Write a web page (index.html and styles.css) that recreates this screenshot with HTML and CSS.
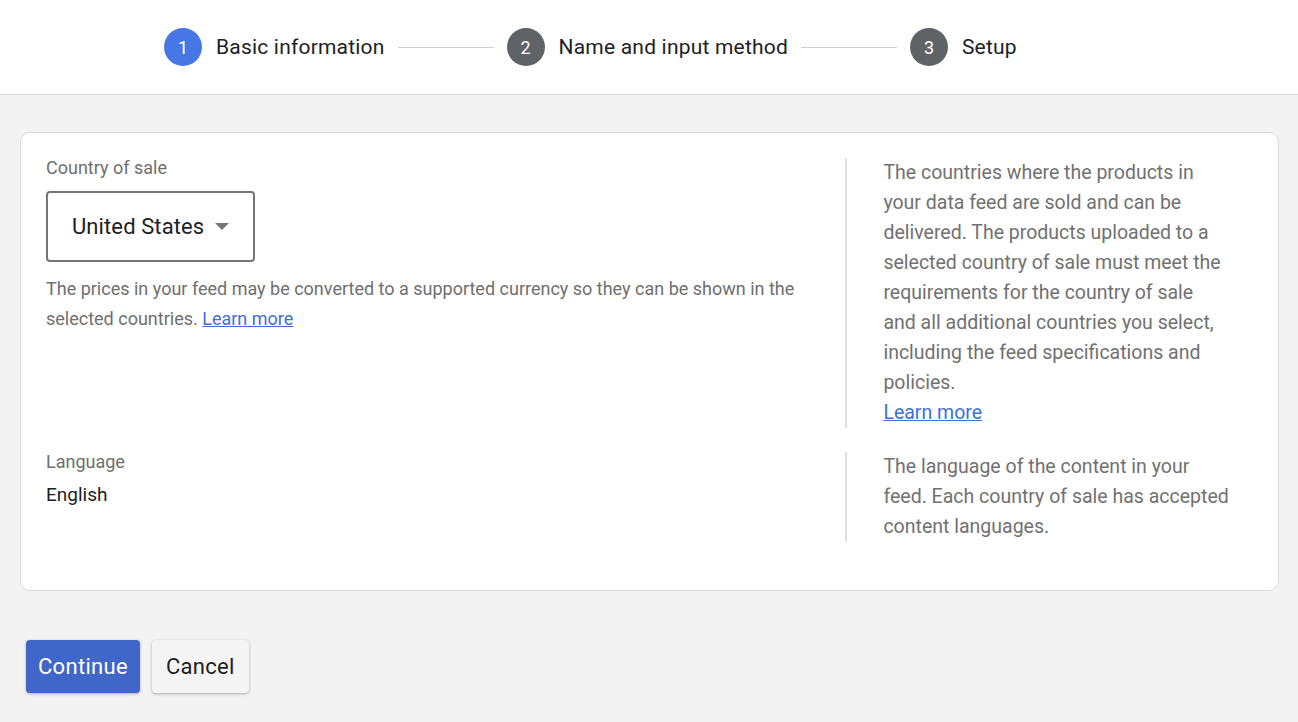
FILE: index.html
```html
<!DOCTYPE html>
<html lang="en">
<head>
  <meta charset="UTF-8">
  <meta name="viewport" content="width=device-width, initial-scale=1.0">
  <title>Create feed</title>
  <link rel="stylesheet" href="styles.css">
</head>
<body>
  <header class="stepper">
    <div class="step active">
      <span class="step-num">1</span>
      <span class="step-label">Basic information</span>
    </div>
    <span class="step-line"></span>
    <div class="step">
      <span class="step-num">2</span>
      <span class="step-label">Name and input method</span>
    </div>
    <span class="step-line"></span>
    <div class="step">
      <span class="step-num">3</span>
      <span class="step-label">Setup</span>
    </div>
  </header>

  <main class="content">
    <section class="card">
      <div class="row">
        <div class="field">
          <div class="field-label">Country of sale</div>
          <div class="select">
            <span>United States</span>
            <span class="caret"></span>
          </div>
          <p class="note">The prices in your feed may be converted to a supported currency so they can be shown in the selected countries. <a href="#">Learn more</a></p>
        </div>
        <div class="help">
          The countries where the products in your data feed are sold and can be delivered. The products uploaded to a selected country of sale must meet the requirements for the country of sale and all additional countries you select, including the feed specifications and policies.
          <br><a href="#">Learn more</a>
        </div>
      </div>

      <div class="row">
        <div class="field">
          <div class="field-label">Language</div>
          <div class="field-value">English</div>
        </div>
        <div class="help">
          The language of the content in your feed. Each country of sale has accepted content languages.
        </div>
      </div>
    </section>

    <div class="actions">
      <button class="btn primary">Continue</button>
      <button class="btn">Cancel</button>
    </div>
  </main>
</body>
</html>
```

FILE: styles.css
```css
body {
  margin: 0;
  font-family: Roboto, "Noto Sans", Arial, sans-serif;
  background-color: #f3f3f3;
  color: #202124;
}
.stepper {
  display: flex;
  align-items: center;
  height: 94px;
  padding-left: 164px;
  background-color: #fff;
  border-bottom: 1px solid #dcdcdc;
}
.step {
  display: flex;
  align-items: center;
  gap: 14px;
}
.step-num {
  display: flex;
  align-items: center;
  justify-content: center;
  width: 38px;
  height: 38px;
  border-radius: 50%;
  background-color: #5f6368;
  color: #fff;
  font-size: 18px;
}
.step.active .step-num {
  background-color: #4677e4;
}
.step-label {
  font-size: 21px;
  color: #202124;
  letter-spacing: 0.2px;
}
.step-line {
  width: 96px;
  height: 1px;
  margin: 0 13px;
  background-color: #cfd0d2;
}
.content {
  padding: 37px 19px 20px 20px;
}
.card {
  background-color: #fff;
  border: 1px solid #dadada;
  border-radius: 10px;
  padding: 25px 24px 48px 25px;
  display: flex;
  flex-direction: column;
  gap: 24px;
}
.row {
  display: flex;
}
.field {
  flex: 1;
  padding-right: 24px;
}
.field-label {
  font-size: 18px;
  line-height: 20px;
  color: #6f6f6f;
}
.select {
  display: inline-flex;
  align-items: center;
  gap: 11px;
  box-sizing: border-box;
  height: 71px;
  margin-top: 13px;
  padding: 0 24px;
  border: 2px solid #757575;
  border-radius: 4px;
  font-size: 22px;
  letter-spacing: 0.1px;
  white-space: nowrap;
  color: #202124;
}
.caret {
  width: 0;
  height: 0;
  border-left: 7px solid transparent;
  border-right: 7px solid transparent;
  border-top: 7px solid #777;
}
.note {
  margin: 12px 0 0;
  font-size: 18px;
  line-height: 30px;
  color: #6f6f6f;
}
.field-value {
  margin-top: 11px;
  font-size: 19px;
  line-height: 24px;
  color: #202124;
}
a {
  color: #3d6fdc;
}
.help {
  width: 345.6px;
  padding-left: 36px;
  padding-right: 25px;
  border-left: 2px solid #e0e0e0;
  font-size: 19.5px;
  line-height: 30px;
  color: #717171;
}
.actions {
  display: flex;
  gap: 12px;
  margin-top: 49px;
  padding-left: 6px;
}
.btn {
  height: 53px;
  padding: 0 12px;
  border: none;
  border-radius: 4px;
  background-color: #f4f4f4;
  color: #202124;
  font-family: Roboto, "Noto Sans", Arial, sans-serif;
  font-size: 22px;
  letter-spacing: 0.3px;
  box-shadow: 0 1px 3px rgba(0,0,0,0.3);
  cursor: pointer;
}
.btn.primary {
  background-color: #3f66c8;
  color: #fff;
}
.btn + .btn {
  padding: 0 14px;
}
```
